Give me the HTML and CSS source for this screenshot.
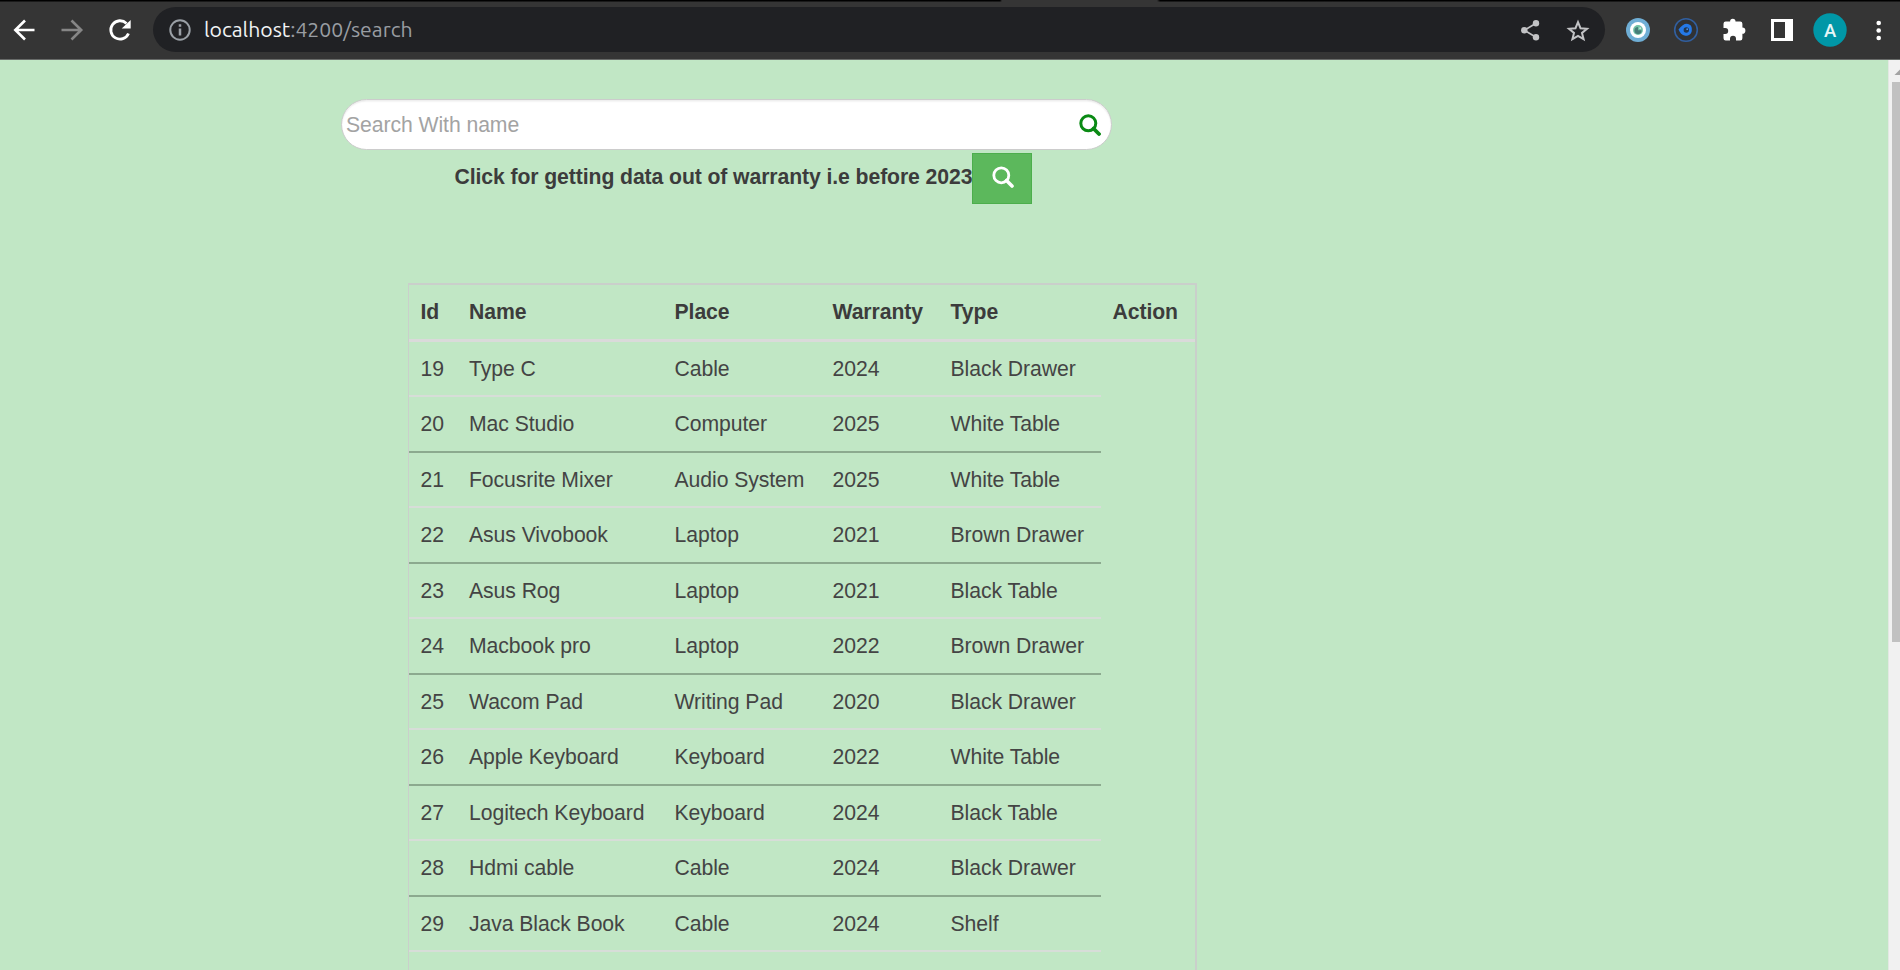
FILE: index.html
```html
<!DOCTYPE html>
<html lang="en">
<head>
<meta charset="utf-8">
<title>Search</title>
<link rel="stylesheet" href="styles.css">
</head>
<body>
<div class="window">
<header class="toolbar">
  <svg class="nav-icons" width="153" height="59" viewBox="0 0 153 59" fill="none" stroke-width="2.6">
    <path d="M34.5 30H15M25 20.5L15.3 30l9.7 9.500" stroke="#fff"/>
    <path d="M61.500 30H81M71.500 20.500L81.200 30l-9.700 9.500" stroke="#868686"/>
    <path d="M128.500 33.500A9.200 9.200 0 1 1 126.500 23.400" stroke="#fff" stroke-width="2.800"/>
    <path d="M130.700 20v8.500h-9z" fill="#fff"/>
  </svg>
  <div class="omnibox">
    <svg class="info" width="24" height="24" viewBox="0 0 24 24" fill="none" stroke="#9aa0a6" stroke-width="2">
      <circle cx="12" cy="12" r="9.700"/><path d="M12 10.500v7M12 6.200v2.600" stroke-width="2.500"/>
    </svg>
    <div class="url"><span class="host">localhost</span>:4200/search</div>
    <svg class="page-actions" width="85" height="44" viewBox="0 0 85 44">
      <g fill="#c2c3c5"><circle cx="16" cy="15.300" r="3.200"/><circle cx="4.300" cy="22.300" r="3.200"/><circle cx="16" cy="29.300" r="3.200"/></g>
      <path d="M16 15.300L4.300 22.300 16 29.300" fill="none" stroke="#c2c3c5" stroke-width="1.700"/>
      <path d="M58 14.200l2.500 6 6.500.500-5 4.200 1.600 6.300-5.600-3.400-5.600 3.400L54 24.900l-5-4.200 6.500-.500z" fill="none" stroke="#c2c3c5" stroke-width="2"/>
    </svg>
  </div>
  <svg class="extensions" width="295" height="59" viewBox="1605 0 295 59">
    <circle cx="1638" cy="30" r="12" fill="#6faed5"/><circle cx="1638" cy="30" r="8" fill="#fff"/><circle cx="1638" cy="30" r="4.900" fill="#6fc0a5"/><path d="M1638 27v3.200h3.500a3.500 3.500 0 1 1-3.500-3.200z" fill="#477d78"/><circle cx="1640.200" cy="28.200" r="1" fill="#cfe9e3"/>
    <circle cx="1686" cy="30" r="11.300" fill="#303235" stroke="#315f9f" stroke-width="1.600"/><path d="M1678.500 29.500q5-6.500 9.500-5.500c3.500.8 4 3.500 3.800 6.500-.2 3.800-3.500 5.600-6.500 5.300-3.500-.5-5.300-3-6.800-6.300z" fill="#2479e8"/><circle cx="1686.300" cy="30" r="2.700" fill="#203650"/><circle cx="1687.200" cy="29.200" r=".9" fill="#4c91e8"/>
    <path d="M1742.500 22h-6.500a2.200 2.200 0 0 0-2.200 2.200v4.300h1.700a3 3 0 0 1 0 6h-1.700v4.300a2.200 2.200 0 0 0 2.200 2.200h4.300v-1.700a3 3 0 0 1 6 0v1.700h4.200a2.200 2.200 0 0 0 2.200-2.200v-4.500h-.1a3.100 3.100 0 0 0 0-6.200h.1v-3.900a2.200 2.200 0 0 0-2.200-2.200h-4.700a2.700 2.700 0 0 0-5.400 0z" fill="#fff" transform="translate(-10.300 -.5)"/>
    <path d="M1771 19h22v22h-22zM1774 22v16h11V22z" fill="#fff" fill-rule="evenodd"/>
    <circle cx="1830" cy="30" r="16.700" fill="#0097a7"/>
    <text x="1830" y="36.800" text-anchor="middle" class="avatar">A</text>
    <g fill="#fff"><circle cx="1878.700" cy="23" r="2.300"/><circle cx="1878.700" cy="30.500" r="2.300"/><circle cx="1878.700" cy="38" r="2.300"/></g>
  </svg>
</header>
<div class="viewport">
<main class="page">
  <div class="search">
    <span class="placeholder">Search With name</span>
    <svg width="22" height="22" viewBox="0 0 22 22" fill="none" stroke="#0a8a14"><circle cx="9.300" cy="9.300" r="7.500" stroke-width="3"/><path d="M14.500 14.500l5.500 5.500" stroke-width="3.800" stroke-linecap="round"/></svg>
  </div>
  <div class="warranty">
    <span class="warranty-label">Click for getting data out of warranty i.e before 2023</span>
    <button class="warranty-button" type="button" aria-label="Search"><svg width="22" height="22" viewBox="0 0 22 22" fill="none" stroke="#fff"><circle cx="9.300" cy="9.300" r="7.500" stroke-width="2.800"/><path d="M14.500 14.500l5.500 5.500" stroke-width="3.600" stroke-linecap="round"/></svg></button>
  </div>
  <div class="table">
    <div class="row head"><span>Id</span><span>Name</span><span>Place</span><span>Warranty</span><span>Type</span><span>Action</span></div>
    <div class="row"><span>19</span><span>Type C</span><span>Cable</span><span>2024</span><span>Black Drawer</span></div>
    <div class="row"><span>20</span><span>Mac Studio</span><span>Computer</span><span>2025</span><span>White Table</span></div>
    <div class="row"><span>21</span><span>Focusrite Mixer</span><span>Audio System</span><span>2025</span><span>White Table</span></div>
    <div class="row"><span>22</span><span>Asus Vivobook</span><span>Laptop</span><span>2021</span><span>Brown Drawer</span></div>
    <div class="row"><span>23</span><span>Asus Rog</span><span>Laptop</span><span>2021</span><span>Black Table</span></div>
    <div class="row"><span>24</span><span>Macbook pro</span><span>Laptop</span><span>2022</span><span>Brown Drawer</span></div>
    <div class="row"><span>25</span><span>Wacom Pad</span><span>Writing Pad</span><span>2020</span><span>Black Drawer</span></div>
    <div class="row"><span>26</span><span>Apple Keyboard</span><span>Keyboard</span><span>2022</span><span>White Table</span></div>
    <div class="row"><span>27</span><span>Logitech Keyboard</span><span>Keyboard</span><span>2024</span><span>Black Table</span></div>
    <div class="row"><span>28</span><span>Hdmi cable</span><span>Cable</span><span>2024</span><span>Black Drawer</span></div>
    <div class="row"><span>29</span><span>Java Black Book</span><span>Cable</span><span>2024</span><span>Shelf</span></div>
  </div>
</main>
<div class="scrollbar">
  <svg width="12" height="22" viewBox="0 0 12 22"><path d="M5.500 15l6.500-6.500V15z" fill="#a3a3a3"/></svg>
  <div class="thumb"></div>
</div>
</div>
</div>
</body>
</html>
```
FILE: styles.css
```css
* { box-sizing: border-box; }
body { margin: 0; overflow: hidden; }
.window {
  display: flex;
  flex-direction: column;
  width: 1900px;
  height: 970px;
  overflow: hidden;
  font-family: "Liberation Sans", Arial, sans-serif;
  font-size: 21.2px;
  letter-spacing: -.07px;
  color: #444;
}
.toolbar {
  display: flex;
  flex: none;
  height: 60px;
  border-bottom: 1px solid #686b69;
  background: linear-gradient(90deg, #000 1000px, #353535 1002px, #353535 1157px, #000 1160px) top / 100% 1.500px no-repeat, #353535;
}
.nav-icons, .extensions { display: block; flex: none; }
.omnibox {
  display: flex;
  align-items: center;
  width: 1452px;
  height: 45px;
  margin-top: 7px;
  padding-left: 15px;
  border-radius: 23px;
  background: #202124;
}
.url {
  flex: 1;
  padding-left: 12px;
  font-family: Ubuntu, "Noto Sans", sans-serif;
  font-size: 21.250px;
  letter-spacing: -.03px;
  line-height: 44px;
  height: 45px;
  white-space: nowrap;
  color: #999da2;
}
.host { color: #f1f3f4; }
.avatar { font: 500 18.500px Roboto, sans-serif; fill: #e6f6f7; }
.viewport { display: flex; flex: 1; min-height: 0; background: #c1e7c5; }
.page { flex: 1; padding-top: 39px; overflow: hidden; }
.search {
  display: flex;
  align-items: center;
  justify-content: space-between;
  width: 771px;
  height: 51px;
  margin-left: 341px;
  padding: 0 10px 0 4px;
  border: 1.500px solid #ccc;
  border-radius: 26px;
  background: #fff;
  box-shadow: inset 0 1.500px 1.500px rgba(0, 0, 0, .075);
}
.placeholder { color: #a3a3a3; }
.warranty {
  display: flex;
  height: 51px;
  margin: 3px 0 0 454.500px;
  white-space: nowrap;
}
.warranty-label { width: 517.500px; line-height: 48px; letter-spacing: -.09px; font-weight: bold; color: #3c3c3c; }
.warranty-button {
  display: flex;
  align-items: center;
  justify-content: center;
  width: 60px;
  height: 51px;
  padding: 0 0 3px 2px;
  border: 1px solid #4cae4c;
  background: #5cb85c;
}
.table {
  width: 789px;
  height: 800px;
  margin: 79px 0 0 407.500px;
  border: 2px solid #cacfcb;
  border-width: 2px 2px 0 1px;
}
.row {
  display: grid;
  grid-template-columns: 48.500px 205.500px 158px 118px 162px;
  width: 692px;
  height: 55.530px;
  line-height: 53px;
  white-space: nowrap;
  border-bottom: 2px solid #d7ddd8;
}
.row span { padding-left: 12px; }
.row:nth-child(odd) { border-bottom-color: #8caa8f; }
.row.head {
  grid-template-columns: 48.500px 205.500px 158px 118px 162px 94px;
  width: 786px;
  height: 56.500px;
  line-height: 54px;
  font-weight: bold;
  color: #3c3c3c;
  border-bottom: 3px solid #dadada;
}
.scrollbar { flex: none; width: 12px; background: #f1f1f1; border-left: 1px solid #e3e8e3; }
.scrollbar svg { display: block; }
.thumb { height: 560px; margin-left: 3px; background: #c1c1c1; }
```
